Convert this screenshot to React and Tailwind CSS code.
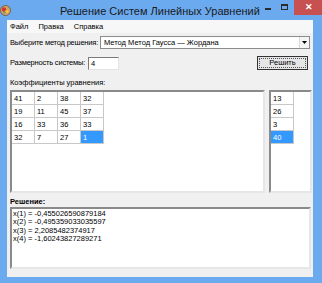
import React from 'react';

const matrix = [
  [41, 2, 38, 32],
  [19, 11, 45, 37],
  [16, 33, 36, 33],
  [32, 7, 27, 1],
];
const rhs = [13, 26, 3, 40];
const roots = [
  'x(1) = -0,455026590879184',
  'x(2) = -0,495359033035597',
  'x(3) = 2,2085482374917',
  'x(4) = -1,60243827289271',
];

const font = { fontFamily: '"Liberation Sans", Arial, sans-serif' };

function Cell({ value, selected }) {
  return (
    <div
      className={`w-[23px] h-[13px] shrink-0 border-r border-b border-[#c8c8c8] pl-[2px] text-[7.5px] leading-[13px] ${
        selected ? 'bg-[#3399ff] text-white' : 'bg-white text-black'
      }`}
    >
      {value}
    </div>
  );
}

function AppIcon() {
  return (
    <svg width="11" height="11" viewBox="0 0 11 11">
      <circle cx="5.5" cy="5.5" r="5" fill="#c9a86a" stroke="#7a4a2a" strokeWidth="0.8" />
      <circle cx="4" cy="4.5" r="2.2" fill="#d8352a" />
      <circle cx="7" cy="6.5" r="1.8" fill="#f2c230" />
      <circle cx="4.5" cy="7.5" r="1.2" fill="#8a8a8a" />
    </svg>
  );
}

export default function App() {
  return (
    <div
      className="w-[322px] h-[283px] bg-[#6caaf0] flex flex-col overflow-hidden text-black"
      style={font}
    >
      {/* Title bar */}
      <div className="h-[20px] flex items-start shrink-0">
        <div className="w-[6px]" />
        <div className="pt-[5px]">
          <AppIcon />
        </div>
        <div className="flex-1 text-center text-[11px] leading-[22px] text-[#1a1a1a] pl-[49px] whitespace-nowrap">
          Решение Систем Линейных Уравнений
        </div>
        <div className="flex items-start">
          <div className="w-[16px] h-[14px] flex items-center justify-center">
            <div className="w-[6px] h-[2px] bg-[#2b2b2b] mt-[3px]" />
          </div>
          <div className="w-[18px] h-[14px] flex items-center justify-center">
            <div className="w-[7px] h-[6px] border border-[#2b2b2b] border-t-2" />
          </div>
          <div className="w-[31px] h-[15px] bg-[#c75050] flex items-center justify-center text-white text-[9px] font-bold leading-none">
            ✕
          </div>
          <div className="w-[3px]" />
        </div>
      </div>

      {/* Client area */}
      <div className="flex-1 ml-[7px] mr-[9px] mb-[6px] bg-[#f0f0f0] flex flex-col">
        {/* Menu */}
        <div className="h-[13px] bg-[#f7f7f7] flex items-center text-[7.5px] pl-[3px] gap-[10px] whitespace-nowrap">
          <span>Файл</span>
          <span>Правка</span>
          <span>Справка</span>
        </div>

        <div className="flex flex-col pl-[3px] pr-[1px] text-[7.5px] whitespace-nowrap">
          {/* Method */}
          <div className="flex items-center mt-[3px] h-[13px]">
            <span className="w-[90px] tracking-[-0.2px]">Выберите метод решения:</span>
            <div className="w-[210px] h-[13px] bg-white border border-[#8c8c8c] flex items-center">
              <span className="flex-1 pl-[3px]">Метод Метод Гаусса — Жордана</span>
              <div className="w-[10px] h-full border-l border-[#d9d9d9] bg-[#f4f4f4] flex items-center justify-center">
                <svg width="5" height="3" viewBox="0 0 5 3">
                  <path d="M0 0h5L2.5 3z" fill="#000" />
                </svg>
              </div>
            </div>
          </div>

          {/* Size + button */}
          <div className="flex items-center mt-[7px] h-[14px]">
            <span className="w-[78px] tracking-[-0.2px]">Размерность системы:</span>
            <div className="w-[31px] h-[13px] bg-white border border-[#7a7a7a] border-b-[#e3e3e3] border-r-[#e3e3e3] pl-[2px] leading-[11px]">
              4
            </div>
            <div className="flex-1" />
            <div className="w-[51px] h-[14px] border border-[#333] bg-[#e6e6e6] p-[1px] mr-[4px]">
              <div className="w-full h-full border border-dotted border-[#555] flex items-center justify-center leading-none">
                Решить
              </div>
            </div>
          </div>

          {/* Coefficients label */}
          <div className="mt-[8px] h-[10px] leading-[10px]">Коэффициенты уравнения:</div>

          {/* Grids */}
          <div className="flex gap-[4px] mt-[2px]">
            <div className="w-[255px] h-[103px] bg-white border-2 border-t-[#8a8a8a] border-l-[#8a8a8a] border-b-[#e6e6e6] border-r-[#e6e6e6]">
              {matrix.map((row, i) => (
                <div key={i} className="flex">
                  {row.map((v, j) => (
                    <Cell key={j} value={v} selected={i === 3 && j === 3} />
                  ))}
                </div>
              ))}
            </div>
            <div className="w-[43px] h-[103px] bg-white border-2 border-t-[#8a8a8a] border-l-[#8a8a8a] border-b-[#e6e6e6] border-r-[#e6e6e6]">
              {rhs.map((v, i) => (
                <Cell key={i} value={v} selected={i === 3} />
              ))}
            </div>
          </div>

          {/* Solution */}
          <div className="mt-[4px] h-[10px] leading-[10px] font-bold">Решение:</div>
          <div className="w-[301px] h-[62px] bg-white border-2 border-t-[#8a8a8a] border-l-[#8a8a8a] border-b-[#e6e6e6] border-r-[#e6e6e6] pl-[1px] pt-[1px]">
            {roots.map((r) => (
              <div key={r} className="leading-[8.3px] text-[7.5px]">
                {r}
              </div>
            ))}
          </div>
        </div>
      </div>
    </div>
  );
}
